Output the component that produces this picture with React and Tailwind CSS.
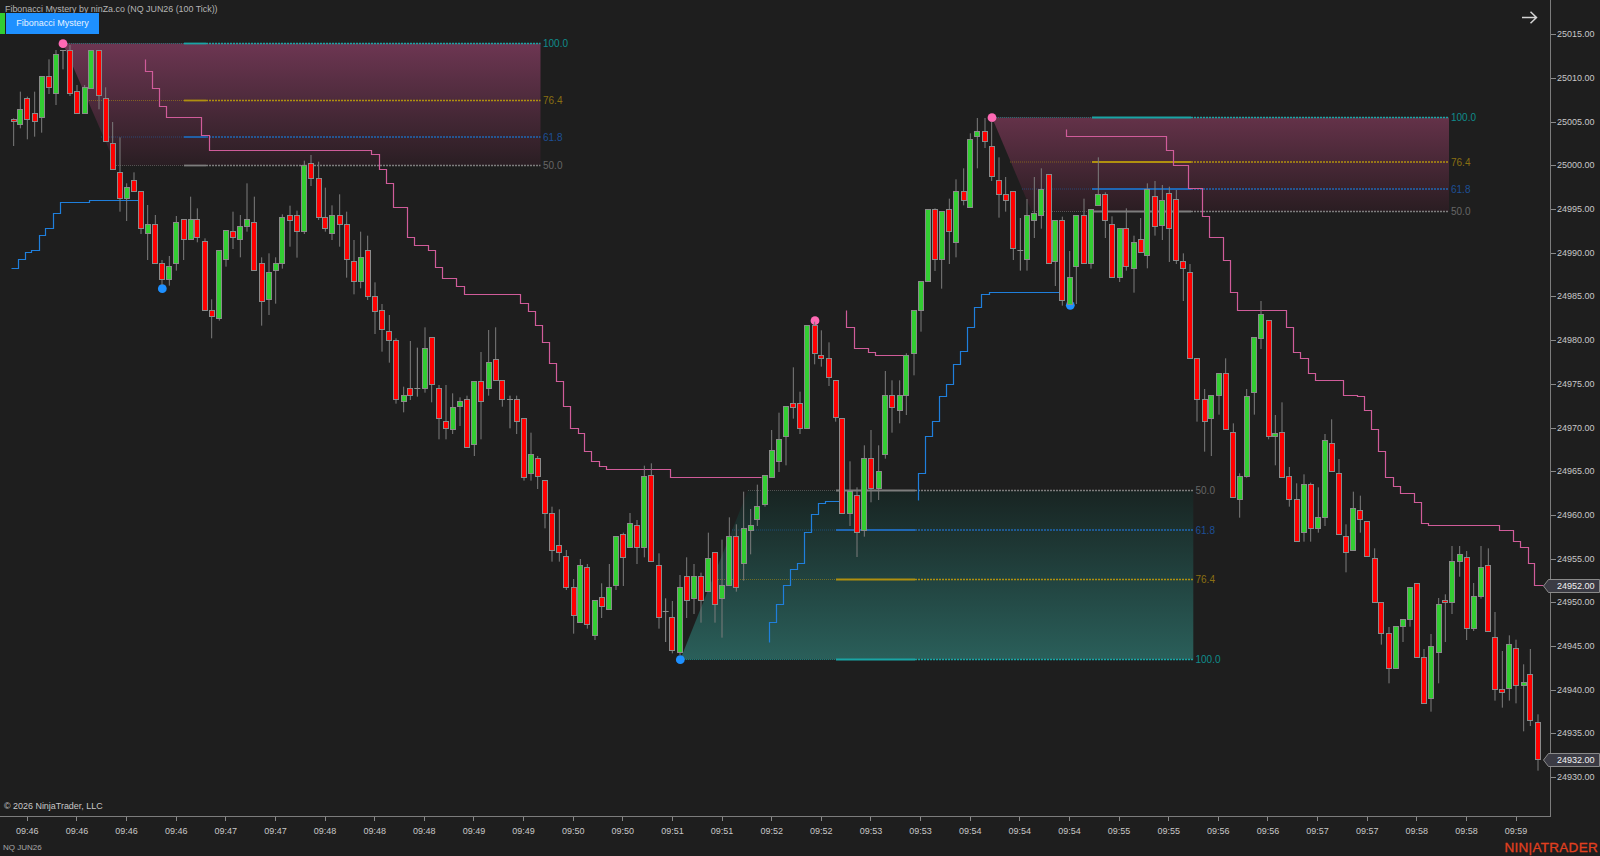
import React from "react";

const G = "g";
const R = "r";

// [x, wickTop, wickBottom, bodyTop, bodyBottom, colour] at 3x, relative to an origin
const batches = [
  { o: [0, 0], c: [
    [41,355,438,358,365,R],[61,275,385,327,372,G],[82,290,418,294,358,R],[104,275,410,340,364,R],[125,228,398,228,352,G],[147,178,282,229,261,R],[168,150,315,163,281,G],[189,150,208,150,150,"d"],[210,135,288,150,281,R],[231,255,340,274,340,R],[254,255,340,261,340,G],[274,150,266,150,266,G],[297,150,328,150,286,R],[317,262,425,294,425,R],[338,366,508,430,508,R],[360,412,635,516,595,R],[380,550,663,561,595,G],[402,517,575,541,574,R],
  ]},
  { o: [0, 220], c: [
    [423,-86,42,-86,25,R],[443,-45,120,13,41,G],[466,-15,131,13,131,R],[486,120,195,131,177,R],[508,108,197,139,177,G],[529,-12,152,7,131,G],[551,-2,120,-2,58,R],[572,-70,58,-2,58,G],[592,-35,67,-2,52,R],[615,55,271,65,271,R],[635,238,355,270,288,R],[658,91,302,91,296,G],[678,32,140,32,118,G],[699,-25,87,33,53,R],[721,-15,112,20,58,G],[741,-110,35,-2,20,G],[763,-70,151,7,151,R],[785,112,317,131,243,R],[807,100,285,157,238,G],[827,112,251,131,152,G],[847,-17,146,-8,131,G],[870,-43,80,-13,0,R],[891,-28,113,-13,33,R],[913,-178,42,-164,33,G],[933,-195,-102,-170,-124,R],[956,-175,0,-124,-8,R],[976,-97,35,-8,25,R],[996,-44,60,-13,40,G],[1019,-77,80,-13,13,R],[1040,-25,173,13,118,R],[1062,60,223,124,184,R],[1082,35,205,111,184,G],[1103,47,240,91,230,R],[1125,187,342,229,275,R],[1146,252,395,270,329,R],[1168,285,428,334,361,R],[1188,355,551,361,538,R],
  ]},
  { o: [400, 300], c: [
    [11,260,337,286,305,G],[31,123,300,265,286,R],[52,143,290,265,265,"d"],[75,82,278,146,265,G],[95,113,307,113,252,R],[117,255,418,265,356,R],[138,255,418,364,385,R],[158,280,402,323,389,G],[180,292,378,305,318,G],[201,287,442,298,442,R],[223,244,468,244,434,G],[243,156,418,244,305,R],[266,90,287,187,265,G],[287,82,240,179,240,R],[307,240,320,240,298,R],[330,287,385,298,298,"d"],[350,287,402,298,364,R],[372,356,542,356,532,R],[393,398,542,462,520,G],[413,468,567,475,528,R],
  ]},
  { o: [400, 480], c: [
    [435,0,145,0,99,R],[456,80,245,99,210,R],[478,88,245,197,218,R],[499,210,330,230,321,R],[521,297,461,321,407,R],[541,237,428,256,428,G],[562,252,446,263,432,R],[585,362,480,362,465,G],[605,310,414,353,379,R],[628,252,387,321,387,G],[648,169,330,169,317,G],[670,158,318,164,231,R],[690,99,203,131,203,G],[711,120,252,136,203,R],[733,-43,232,-12,203,G],[754,-50,243,-13,243,R],[777,220,446,256,412,R],[797,355,486,394,394,"d"],[817,363,520,412,511,R],[840,285,525,321,517,G],[860,232,414,289,361,R],[882,252,402,289,354,G],[903,278,428,289,361,R],[925,158,334,235,334,G],[945,218,428,218,374,R],[966,179,473,316,354,G],[988,112,317,169,317,G],[1009,133,335,169,321,R],[1031,35,302,144,251,G],[1052,87,223,136,152,G],[1072,14,138,79,119,G],[1095,-13,80,-13,72,G],
  ]},
  { o: [400, 300], c: [
    [1115,390,532,450,532,G],[1137,338,516,417,483,G],[1158,318,496,318,409,G],[1180,202,356,310,323,R],
  ]},
  { o: [780, 300], c: [
    [60,275,402,310,384,R],[81,75,384,75,384,G],[104,65,193,75,160,R],[124,91,200,166,175,R],[147,127,258,175,233,R],[167,240,365,240,351,R],[187,356,639,356,639,R],[210,484,678,573,639,G],[231,562,771,586,697,R],[253,436,710,475,692,G],[273,390,607,475,566,R],[296,436,600,515,566,G],[316,213,476,286,462,G],[336,241,398,286,323,R],[359,241,370,286,331,G],[379,160,345,166,286,G],[402,31,226,31,160,G],[423,-56,95,-56,31,G],
  ]},
  { o: [760, 100], c: [
    [505,327,545,327,545,G],[525,325,513,327,479,R],[545,334,566,334,479,G],[568,296,492,328,393,R],[588,238,472,274,427,G],[611,205,316,274,302,R],[631,100,322,118,322,G],[652,54,205,93,110,G],[675,54,144,93,125,R],[695,65,243,138,229,R],[717,172,353,241,282,R],[737,231,335,282,302,R],[760,274,480,274,446,R],[781,354,512,451,451,"d"],[801,297,512,347,479,G],[823,231,414,340,361,G],[844,205,386,268,347,G],[866,224,491,224,491,R],[886,360,558,360,485,G],[907,350,617,360,602,R],[929,453,612,532,612,G],[949,347,612,347,499,G],[972,296,491,347,491,R],[993,327,506,327,491,G],[1015,172,315,282,315,G],[1036,277,414,282,360,R],[1056,349,532,373,532,R],[1079,385,546,385,532,G],[1099,325,512,385,499,R],[1122,407,578,426,505,G],[1142,354,458,418,458,R],[1162,250,505,268,466,G],[1185,243,407,289,380,R],[1207,255,420,300,375,G],[1228,260,486,279,384,R],[1249,270,492,297,480,R],
  ]},
  { o: [1120, 260], c: [
    [190,-20,123,4,24,R],[210,12,295,37,295,R],[231,295,485,295,418,R],[254,387,575,418,485,R],[274,406,588,406,476,G],[297,340,464,340,406,G],[317,295,509,340,509,R],[340,490,713,517,713,R],[359,640,773,648,719,G],[380,387,653,410,648,G],[403,233,464,233,398,G],[423,123,267,163,234,G],[446,181,538,181,529,R],[466,465,616,521,529,G],[486,427,652,517,652,R],[508,621,740,648,718,R],
  ]},
  { o: [1200, 480], c: [
    [290,10,185,58,185,R],[312,-17,185,12,158,G],[332,8,185,14,144,R],[355,22,158,111,145,G],[375,-138,138,-119,111,G],[395,-182,-25,-111,-25,R],[417,-63,164,-20,164,R],[438,133,277,170,217,R],[460,35,210,86,210,G],[481,47,158,92,118,R],[501,124,230,124,230,R],[524,205,366,235,366,R],[544,367,494,367,460,R],[567,441,610,461,564,R],[587,440,564,440,564,G],[609,419,486,419,440,G],[630,321,440,321,419,G],[651,309,531,309,531,R],[672,507,669,531,669,R],[693,462,695,498,655,G],[716,354,610,374,518,G],[736,343,486,362,367,R],[756,198,402,243,367,G],[779,198,290,223,243,G],[800,213,480,231,445,R],[821,309,453,349,445,G],[843,198,356,262,349,G],[865,205,453,256,453,R],[885,396,662,472,629,R],[907,513,683,629,637,R],[928,466,662,493,624,G],[948,479,670,506,616,R],[971,553,754,608,616,G],[991,507,738,584,720,R],[1014,703,872,727,838,R],
  ]},
];

const candles = batches.flatMap(({ o, c }) =>
  c.map(([x, wt, wb, bt, bb, k]) => ({
    x: o[0] + x / 3,
    wt: o[1] + wt / 3,
    wb: o[1] + wb / 3,
    bt: o[1] + bt / 3,
    bb: o[1] + bb / 3,
    k,
  }))
);

const snap = (v) => Math.floor(v) + 0.5;

// step lines: origin, then x,y pairs at 3x
const steps = (ox, oy, pts) => {
  const out = [];
  for (let i = 0; i < pts.length; i += 2) out.push(`${snap(ox + pts[i] / 3)},${snap(oy + pts[i + 1] / 3)}`);
  return out.join(" ");
};
const raw = (pts) => {
  const out = [];
  for (let i = 0; i < pts.length; i += 2) out.push(`${snap(pts[i])},${snap(pts[i + 1])}`);
  return out.join(" ");
};

const pinkLines = [
  [
    steps(0, 0, [436,178,436,215,456,215,456,265,478,265,478,320,499,320,499,352,605,352,605,405,627,405,627,451,1115,451,1115,463,1137,463,1137,508,1158,508,1158,549,1180,549,1180,622,1200,622]),
    raw([407,207,407,237,414,237,414,245,428,245,428,250,435,250,435,267,442,267,442,278,456,278,456,286,464,286,464,294]),
    raw([513,294,520,294]),
    steps(400, 300, [361,10,385,10,385,35,405,35,405,76,426,76,426,126,448,126,448,191,469,191,469,245,491,245,491,318,512,318,512,384,534,384,534,401,554,401,554,455,575,455,575,483,598,483,598,499,618,499,618,508,810,508,810,532,1085,532]),
  ].join(" "),
  steps(780, 300, [199,31,199,81,223,81,223,146,265,146,265,158,287,158,287,166,379,166]),
  [
    steps(760, 100, [919,87,919,110]),
    raw([1166,136,1166,150,1173,150,1173,165,1188,165,1188,188,1202,188,1202,216,1209,216,1209,237,1223,237,1223,260]),
    steps(1120, 260, [330,0,330,97,352,97,352,150,499,150,499,201,521,201,521,278,541,278,541,294,565,294,565,340,585,340,585,360,670,360,670,405,713,405,713,410,733,410,733,451,754,451,754,508,776,508,776,574,797,574,797,653,820,653]),
    steps(1200, 480, [580,20,600,20,600,41,643,41,643,66,664,66,664,131,686,131,686,136,897,136,897,152,941,152,941,184,962,184,962,203,984,203,984,250,1004,250,1004,316,1030,316]),
  ].join(" "),
];

const blueLines = [
  [
    steps(0, 220, [33,144,55,144,55,118,75,118,75,98,95,98,95,91,118,91,118,46,137,46,137,25,160,25]),
    steps(0, 0, [160,640,181,640,181,607,267,607,267,602,415,602]),
  ].join(" "),
  [
    steps(400, 480, [1108,486,1108,427,1128,427,1128,374,1150,374,1150,316,1171,316,1171,268,1192,268,1192,250]),
    steps(780, 480, [73,250,73,157,95,157,95,103,116,103,116,71,137,71,137,65,180,65]),
  ].join(" "),
  [
    steps(780, 300, [415,600,415,520,435,520,435,409,458,409,458,364,478,364,478,290,499,290,499,252,520,252,520,192,542,192,542,155,563,155,563,81,584,81,584,22,604,22]),
    steps(760, 100, [664,582,687,582,687,578,900,578]),
  ].join(" "),
];

const LEVEL = {
  100: { line: "#19a5a5", text: "#0f8c8c" },
  76.4: { line: "#b0900f", text: "#8a6f12" },
  61.8: { line: "#1f67b4", text: "#1d4f96" },
  50: { line: "#7d7d7d", text: "#666666" },
};

const boxes = [
  {
    id: "f1", from: "#6d3652", to: "#2a1e23", y1: 43.5, y2: 165.5,
    poly: "63,43.5 540.5,43.5 540.5,165.5 116,165.5",
    solid: [184, 206], right: 540.5, label: 543,
    levels: [["100.0", 100, 43.5, 63], ["76.4", 76.4, 100.5, 87], ["61.8", 61.8, 137, 101], ["50.0", 50, 165.5, 116]],
  },
  {
    id: "f2", from: "#643249", to: "#2a1d22", y1: 117.5, y2: 211.5,
    poly: "992,117.5 1449,117.5 1449,211.5 1031.7,211.5",
    solid: [1092, 1191], right: 1449, label: 1451,
    levels: [["100.0", 100, 117.5, 992], ["76.4", 76.4, 162, 1010], ["61.8", 61.8, 189, 1022], ["50.0", 50, 211.5, 1032]],
  },
  {
    id: "f3", from: "#182422", to: "#2a5f5a", y1: 490.5, y2: 659.5,
    poly: "680.3,659.5 1193.3,659.5 1193.3,490.5 748,490.5",
    solid: [836, 915], right: 1193.3, label: 1195.5,
    levels: [["50.0", 50, 490.5, 748], ["61.8", 61.8, 530, 732], ["76.4", 76.4, 579.5, 718], ["100.0", 100, 659.5, 680]],
  },
];

const dots = [
  [63, 43.7, "#ff69b4"],
  [162.3, 288.7, "#1e90ff"],
  [815, 320.7, "#ff69b4"],
  [992, 117.7, "#ff69b4"],
  [680.3, 659.7, "#1e90ff"],
  [1070.3, 305.3, "#1e90ff"],
];

const prices = ["25015.00","25010.00","25005.00","25000.00","24995.00","24990.00","24985.00","24980.00","24975.00","24970.00","24965.00","24960.00","24955.00","24950.00","24945.00","24940.00","24935.00","24930.00"];
const times = ["09:46","09:46","09:46","09:46","09:47","09:47","09:48","09:48","09:48","09:49","09:49","09:50","09:50","09:51","09:51","09:52","09:52","09:53","09:53","09:54","09:54","09:54","09:55","09:55","09:56","09:56","09:57","09:57","09:58","09:58","09:59"];

function Candle({ d }) {
  if (d.k === "d") {
    const y = snap(d.bt);
    return (
      <g stroke="#8c8c8c" strokeWidth="1">
        <line x1={d.x} x2={d.x} y1={d.wt} y2={d.wb} />
        <line x1={d.x - 3} x2={d.x + 3} y1={y} y2={y} />
      </g>
    );
  }
  const left = Math.round(d.x) - 2.5;
  const top = snap(d.bt);
  const bottom = Math.max(snap(d.bb), top + 2);
  return (
    <g>
      <line x1={d.x} x2={d.x} y1={d.wt} y2={d.wb} stroke="#7c7c7c" strokeWidth="1" />
      <rect x={left} y={top} width="5" height={bottom - top} fill={d.k === G ? "#32cd32" : "#ff0000"} stroke="#8a8a8a" strokeWidth="1" />
    </g>
  );
}

function Chart() {
  return (
    <svg width="1550" height="816" viewBox="0 0 1550 816" className="block [font-family:'Liberation_Sans',sans-serif]">
      <defs>
        {boxes.map((b) => (
          <linearGradient key={b.id} id={b.id} gradientUnits="userSpaceOnUse" x1="0" x2="0" y1={b.y1} y2={b.y2}>
            <stop offset="0" stopColor={b.from} />
            <stop offset="1" stopColor={b.to} />
          </linearGradient>
        ))}
      </defs>
      {boxes.map((b) => (
        <g key={b.id}>
          <polygon points={b.poly} fill={`url(#${b.id})`} />
          {b.levels.map(([name, lvl, y, start]) => {
            const c = LEVEL[lvl].line;
            return (
              <g key={name}>
                <line x1={start} x2={b.solid[0]} y1={y} y2={y} stroke={c} strokeWidth="1" strokeDasharray="1 1" opacity="0.55" />
                <line x1={b.solid[0]} x2={b.solid[1]} y1={y} y2={y} stroke={c} strokeWidth="1.8" />
                <line x1={b.solid[1]} x2={b.right} y1={y} y2={y} stroke={c} strokeWidth="1.4" strokeDasharray="2 1" />
                <text x={b.label} y={y + 3.6} fontSize="10" fill={LEVEL[lvl].text}>{name}</text>
              </g>
            );
          })}
        </g>
      ))}
      {pinkLines.map((p, i) => (
        <polyline key={i} points={p} fill="none" stroke="#d05c9a" strokeWidth="1.2" />
      ))}
      {blueLines.map((p, i) => (
        <polyline key={i} points={p} fill="none" stroke="#1f7fdc" strokeWidth="1.2" />
      ))}
      {dots.map(([x, y, c], i) => (
        <circle key={i} cx={x} cy={y} r="4.4" fill={c} />
      ))}
      {candles.map((d, i) => (
        <Candle key={i} d={d} />
      ))}
    </svg>
  );
}

function PriceTag({ top, children }) {
  return (
    <div className="absolute right-0 w-[57px] h-[14px] flex items-center" style={{ top }}>
      <svg width="57" height="14" viewBox="0 0 57 14" className="absolute inset-0">
        <polygon points="0.5,7 5.5,0.5 56.5,0.5 56.5,13.5 5.5,13.5" fill="#3b3b44" stroke="#8a8a8a" strokeWidth="1" />
      </svg>
      <span className="relative pl-[14px] text-[9px] leading-none text-[#f2f2f2]">{children}</span>
    </div>
  );
}

export default function App() {
  return (
    <div className="w-[1600px] h-[856px] overflow-hidden bg-[#1e1e1e] flex flex-col [font-family:'Liberation_Sans',sans-serif]">
      <div className="flex h-[817px] shrink-0">
        <div className="relative w-[1551px] h-[817px] border-r border-b border-[#7c7c7c]">
          <Chart />
          <div className="absolute left-[5px] top-[3px] text-[8.9px] leading-[12px] whitespace-nowrap text-[#b4b4b4]">
            Fibonacci Mystery by ninZa.co (NQ JUN26 (100 Tick))
          </div>
          <div className="absolute left-0 top-[13px] flex h-[21px]">
            <div className="w-[5px] bg-[#32cd32]" />
            <div className="ml-px w-[93px] bg-[#1e90ff] flex items-center justify-center text-[9px] text-[#e6f2ff]">
              Fibonacci Mystery
            </div>
          </div>
          <svg width="17" height="14" viewBox="0 0 17 14" className="absolute left-[1521px] top-[11px]">
            <path d="M1 6.5H15.5M9.5 0.7L15.5 6.5L9.5 12.3" fill="none" stroke="#d4d4d4" strokeWidth="1.5" />
          </svg>
          <div className="absolute left-[4px] top-[800px] text-[8.95px] leading-[12px] whitespace-nowrap text-[#c8c8c8]">
            © 2026 NinjaTrader, LLC
          </div>
        </div>
        <div className="relative flex-1 pt-[13px] flex flex-col">
          {prices.map((p) => (
            <div key={p} className="h-[43.7px] shrink-0 flex items-center">
              <div className="w-[5px] h-px bg-[#8a8a8a]" />
              <span className="ml-[1px] text-[9px] leading-none text-[#c8c8c8]">{p}</span>
            </div>
          ))}
          <PriceTag top={579}>24952.00</PriceTag>
          <PriceTag top={753}>24932.00</PriceTag>
        </div>
      </div>
      <div className="flex pl-[2.5px] h-[23px] shrink-0">
        {times.map((t, i) => (
          <div key={i} className="w-[49.63px] shrink-0 flex flex-col items-center">
            <div className="w-px h-[4px] bg-[#8a8a8a]" />
            <span className="mt-[6px] text-[9px] leading-none text-[#c8c8c8]">{t}</span>
          </div>
        ))}
      </div>
      <div className="flex-1 flex items-start justify-between pl-[3px] pr-[2px] pt-px">
        <span className="text-[8px] leading-[14px] text-[#a8a8a8]">NQ JUN26</span>
        <span className="text-[13.5px] leading-[14px] tracking-[0.3px] text-[#e2401f] [-webkit-text-stroke:0.3px_#e2401f]">NIN|ATRADER</span>
      </div>
    </div>
  );
}
